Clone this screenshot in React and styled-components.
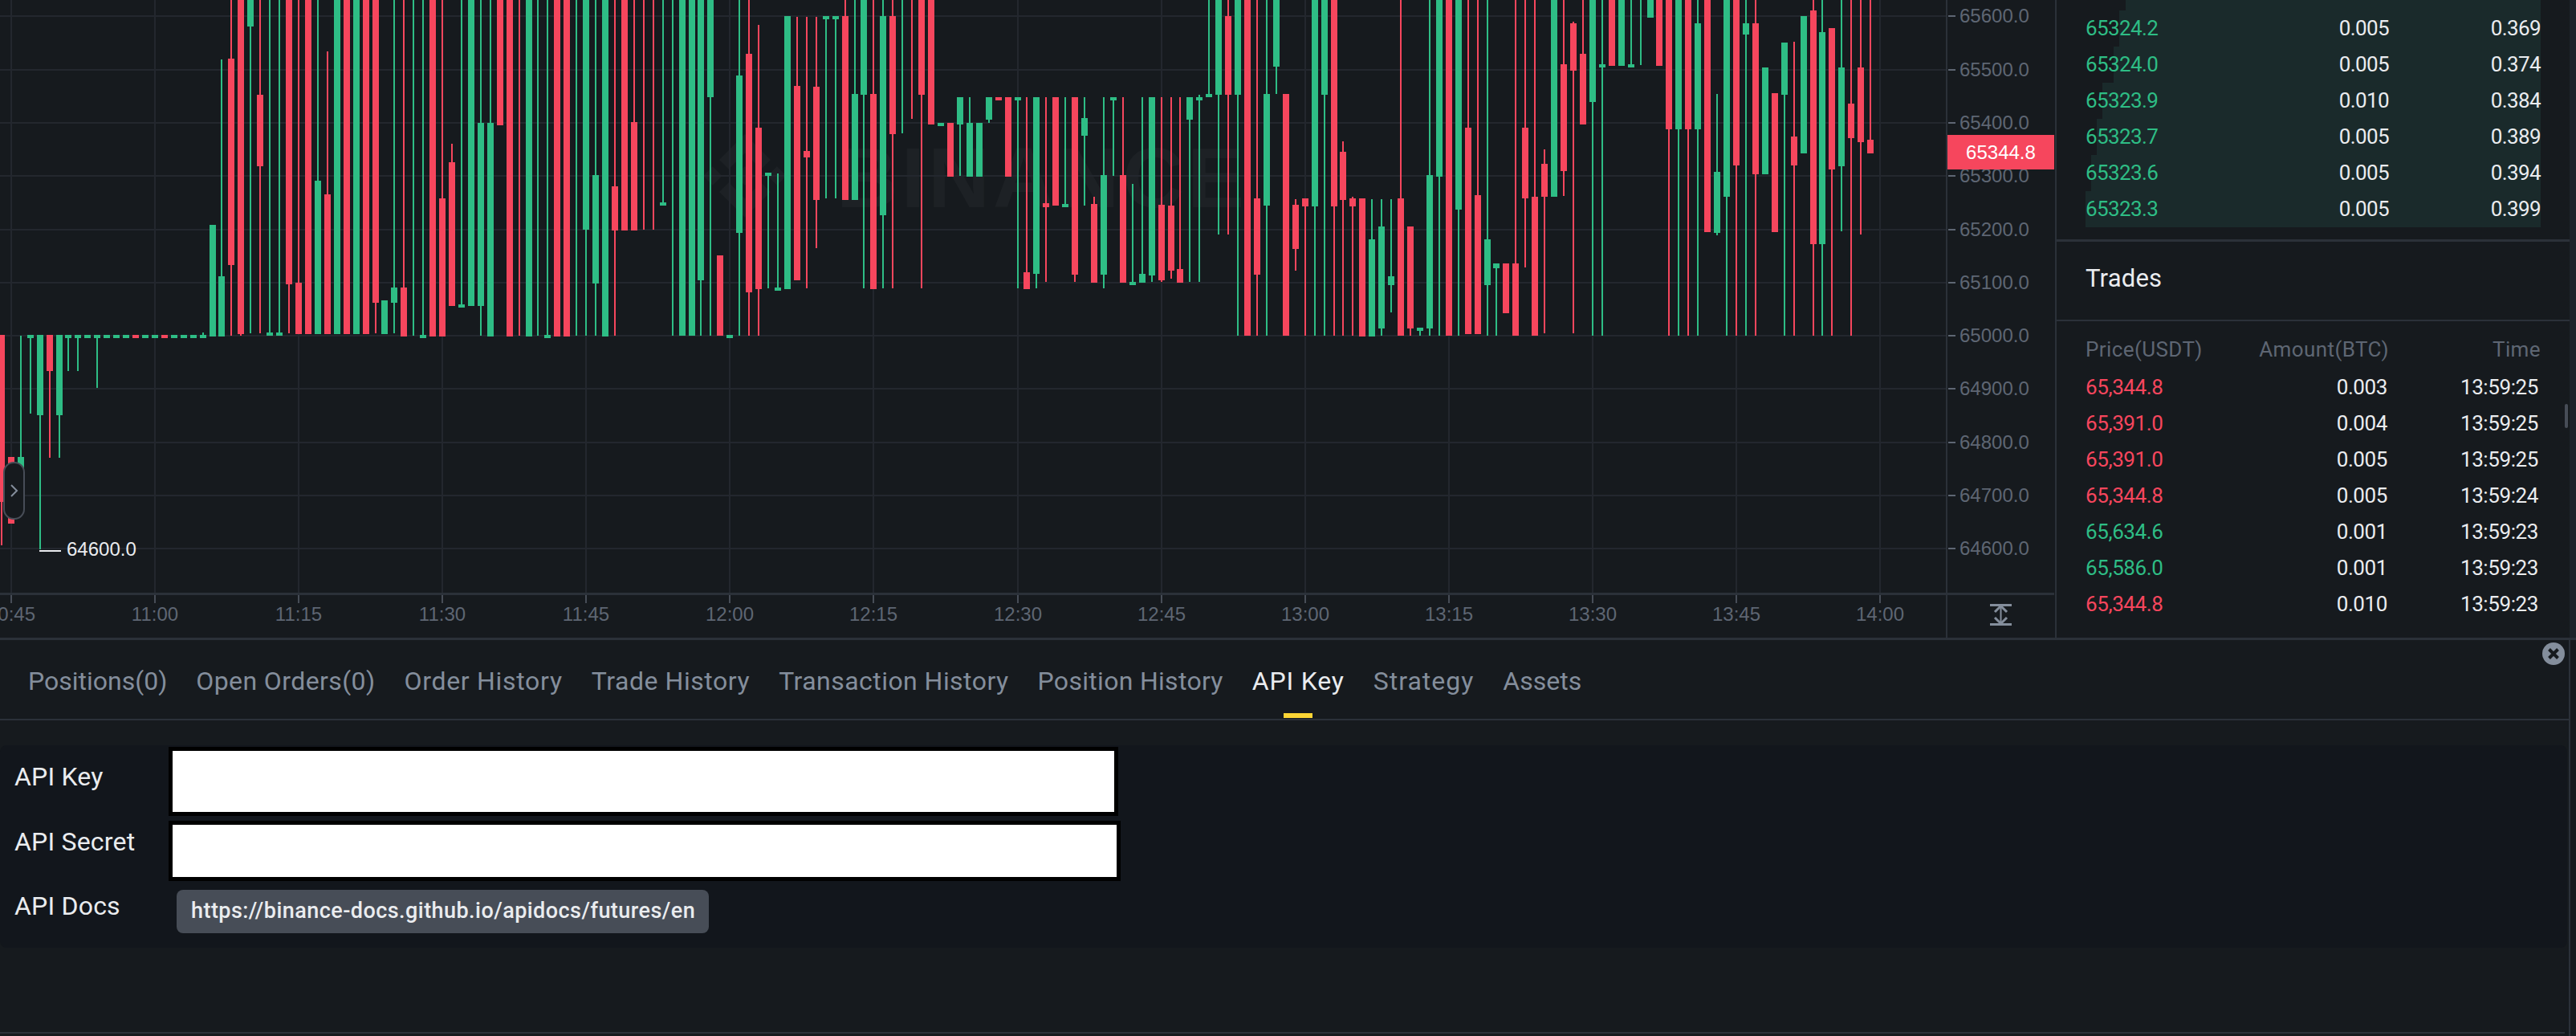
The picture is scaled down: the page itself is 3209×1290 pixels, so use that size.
import React from "react";
import styled, { createGlobalStyle } from "styled-components";

const UI = '"Roboto", "Noto Sans", sans-serif';
const AXIS = '"Liberation Sans", Arial, sans-serif';
const GREEN = "#2ebd85";
const RED = "#f6465d";

const Global = createGlobalStyle`
  html, body { margin: 0; padding: 0; background: #161a1e; }
  #root { width: 3209px; height: 1290px; overflow: hidden; }
`;

const Page = styled.div`
  display: flex;
  flex-direction: column;
  width: 3209px;
  height: 1290px;
  background: #161a1e;
  overflow: hidden;
  position: relative;
`;
const Top = styled.div`
  display: flex;
  height: 797px;
  flex: none;
  box-sizing: border-box;
  border-bottom: 3px solid #2b3139;
`;
const ChartPanel = styled.div`
  position: relative;
  width: 2560px;
  height: 794px;
  flex: none;
  svg { display: block; }
`;
const PriceTag = styled.div`
  position: absolute;
  left: 2426px;
  top: 168px;
  width: 133px;
  height: 43px;
  background: ${RED};
  color: #fff;
  font: 24px/43px ${AXIS};
  text-align: center;
`;
const CollapseHandle = styled.div`
  position: absolute;
  left: 4px;
  top: 575px;
  width: 27px;
  height: 72px;
  box-sizing: border-box;
  border: 2px solid #474d57;
  border-radius: 13px;
  background: #161a1e;
  display: flex;
  align-items: center;
  justify-content: center;
`;
const Sidebar = styled.aside`
  width: 641px;
  flex: none;
  box-sizing: border-box;
  border-left: 2px solid #2b3139;
  display: flex;
  flex-direction: column;
  position: relative;
`;
const RightStrip = styled.div`
  flex: 1;
  background: #1e2329;
`;
const DepthList = styled.div`
  padding: 0 36px;
  height: 301px;
  flex: none;
  box-sizing: border-box;
  border-bottom: 3px solid #2b3139;
  display: flex;
  flex-direction: column;
`;
const DepthStub = styled.div`
  height: 13px;
  flex: none;
  display: flex;
  justify-content: flex-end;
`;
const DepthRow = styled.div`
  position: relative;
  height: 45px;
  flex: none;
  display: grid;
  grid-template-columns: 1fr 1fr 1fr;
  align-items: center;
  font: 400 26px/45px ${UI};
  letter-spacing: -0.6px;
  color: #eaecef;
`;
const DepthBar = styled.div`
  position: absolute;
  right: 0;
  top: 0;
  bottom: 0;
  background: #1a2a2b;
`;
const StubBar = styled.div`
  background: #1a2a2b;
  height: 13px;
`;
const Cell = styled.span`
  position: relative;
  text-align: ${(p) => p.$align || "right"};
  color: ${(p) => p.$color || "#eaecef"};
  padding-right: ${(p) => p.$inset || 0}px;
  white-space: nowrap;
`;
const TradesTitle = styled.div`
  height: 99px;
  flex: none;
  box-sizing: border-box;
  padding-left: 36px;
  border-bottom: 2px solid #2b3139;
  font: 400 31px/92px ${UI};
  letter-spacing: 0.2px;
  color: #eaecef;
`;
const TradesHeader = styled.div`
  display: grid;
  grid-template-columns: 1fr 1fr 1fr;
  padding: 15px 36px 0;
  height: 60px;
  flex: none;
  box-sizing: border-box;
  font: 400 26px/40px ${UI};
  letter-spacing: 0.4px;
`;
const TradeRow = styled.div`
  display: grid;
  grid-template-columns: 1fr 1fr 1fr;
  padding: 0 36px;
  height: 45px;
  flex: none;
  align-items: center;
  font: 400 26px/45px ${UI};
  letter-spacing: -0.4px;
`;
const ScrollThumb = styled.div`
  position: absolute;
  left: 633px;
  top: 503px;
  width: 4px;
  height: 30px;
  background: #474d57;
  border-radius: 2px;
`;
const Bottom = styled.section`
  position: relative;
  flex: 1;
  width: 3202px;
  box-sizing: border-box;
  border-right: 2px solid #2b3139;
  display: flex;
  flex-direction: column;
`;
const Tabs = styled.nav`
  height: 100px;
  flex: none;
  box-sizing: border-box;
  border-bottom: 2px solid #2b3139;
  display: flex;
  gap: 36px;
  padding-left: 35px;
`;
const Tab = styled.div`
  position: relative;
  box-sizing: border-box;
  padding-top: 2px;
  font: 400 32px/98px ${UI};
  letter-spacing: ${(p) => p.$spacing}px;
  color: ${(p) => (p.$active ? "#eaecef" : "#848e9c")};
  white-space: nowrap;
`;
const TabMark = styled.div`
  position: absolute;
  left: 50%;
  bottom: 1px;
  width: 36px;
  height: 6px;
  margin-left: -18px;
  background: #fcd535;
`;
const CloseButton = styled.div`
  position: absolute;
  right: 5px;
  top: 3px;
  width: 28px;
  height: 28px;
  svg { display: block; }
`;
const Form = styled.div`
  margin: 31px 2px 0 0;
  height: 252px;
  flex: none;
  background: #12161c;
  border-radius: 8px;
  padding-top: 2px;
  box-sizing: border-box;
  display: flex;
  flex-direction: column;
`;
const FormRow = styled.div`
  display: flex;
  align-items: flex-start;
  height: ${(p) => p.$h}px;
  flex: none;
`;
const Label = styled.div`
  width: 210px;
  padding-left: 18px;
  box-sizing: border-box;
  flex: none;
  font: 400 32px/40px ${UI};
  letter-spacing: 0.2px;
  color: #eaecef;
  margin-top: ${(p) => p.$top}px;
`;
const KeyInput = styled.input`
  box-sizing: border-box;
  width: ${(p) => p.$w}px;
  height: ${(p) => p.$h}px;
  border: 5px solid #000;
  background: #fff;
  padding: 0;
  outline: none;
`;
const DocsLink = styled.div`
  margin-left: 10px;
  height: 54px;
  width: 663px;
  box-sizing: border-box;
  padding-left: 18px;
  border-radius: 8px;
  background: #474d57;
  color: #eaecef;
  font: 500 27px/52px ${UI};
  letter-spacing: 0.45px;
  white-space: nowrap;
`;
const PageEnd = styled.div`
  margin: auto 5px 3px 0;
  border-top: 2px solid #2b3139;
`;

// [minute index, colour, body top, body bottom, wick top, wick bottom] in measured units
const C = [
  [-1,"r",817,1225,817,1330],[0,"r",1115,1277],[1,"g",1115,1240,820,1240],[2,"g",817,826,817,1010],[3,"g",817,1013,817,1340],
  [4,"r",817,906,817,1117],[5,"g",817,1014,817,1117],[6,"g",817,826,817,905],[7,"g",817,826,817,905],[8,"g",817,826],[9,"g",817,826,817,946],
  [10,"g",817,826],[11,"g",817,826],[12,"g",817,826],[13,"r",817,826],[14,"g",817,826],[15,"g",817,826],[16,"r",817,826],[17,"g",817,826],[18,"g",817,826],[19,"g",817,826],[20,"g",817,826,812,826],
  [21,"g",548,822],[22,"g",674,822,145,822],[23,"r",143,647,-10,820],[24,"r",-10,815,-10,820],[25,"g",-10,65,-10,813],[26,"r",231,405,-10,813],
  [27,"g",812,820,-10,820],[28,"g",812,820,-10,820],[29,"r",-10,693,-10,813],[30,"r",689,815,-10,815],[31,"r",-10,815],[32,"g",441,815,-10,815],[33,"r",475,815,126,815],
  [34,"g",-10,815],[35,"r",-10,815],[36,"g",-10,815],[37,"r",-10,815],[38,"r",-10,738,-10,813],[39,"g",734,815],[40,"g",702,738,-10,813],[41,"r",702,822,-10,822],
  [42,"g",0,0,-10,820],[43,"g",818,826,-10,826],[44,"r",-10,822],[45,"r",485,822,-10,822],[46,"r",396,747,350,747],[47,"g",743,751,-10,751],[48,"g",-10,747],
  [49,"g",300,747,-10,820],[50,"g",300,822,-10,822],[51,"r",-10,305],[52,"r",-10,822],[53,"r",0,0,-10,820],[54,"g",-10,822],[55,"g",0,0,-10,820],[56,"g",818,826,-10,826],
  [57,"r",-10,822],[58,"r",-10,822],[59,"g",0,0,-10,820],[60,"g",-10,560,-10,820],[61,"g",428,692,-10,820],[62,"g",-10,822],[63,"r",455,563,-10,820],[64,"r",-10,563],[65,"r",298,563,-10,563],
  [66,"r",0,0,-10,560],[67,"r",0,0,-10,560],[68,"g",494,502,-10,502],[69,"g",0,0,-10,820],[70,"g",-10,820],[71,"g",-10,820],[72,"g",-10,684,-10,820],[73,"g",-10,238,-10,820],
  [74,"r",623,820],[75,"g",817,825],[76,"g",184,568,-10,820],[77,"r",131,713,-10,820],[78,"r",312,706,61,820],[79,"g",422,430,422,703],[80,"g",702,709,424,709],[81,"g",39,706],
  [82,"r",209,684,41,684],[83,"r",368,384,41,703],[84,"r",211,488,41,606],[85,"g",39,47,39,485],[86,"g",39,47,39,485],[87,"r",39,488,-10,488],[88,"g",229,488,-10,488],
  [89,"g",-10,232,-10,703],[90,"r",229,705,-10,705],[91,"g",39,526,-10,703],[92,"r",39,328,-10,703],[93,"g",0,0,-10,326],[94,"r",0,0,-10,291],[95,"r",-10,232,-10,703],[96,"r",-10,303],
  [97,"g",299,307],[98,"r",299,431],[99,"g",237,303,237,430],[100,"g",299,431,238,431],[101,"g",299,431],[102,"g",237,293,237,300],[103,"r",237,245],[104,"r",237,431],
  [105,"g",237,245,237,703],[106,"r",664,705,238,705],[107,"g",237,669,237,703],[108,"r",496,505,238,688],[109,"r",237,501],[110,"g",497,505,238,505],[111,"r",237,670,237,688],
  [112,"g",289,331,238,501],[113,"r",498,690,480,690],[114,"g",428,670,238,703],[115,"g",237,245,237,430],[116,"r",428,690,238,690],[117,"g",687,695,448,695],[118,"g",668,690,238,690],
  [119,"g",237,672,237,688],[120,"r",500,684,238,688],[121,"r",501,661,238,681],[122,"r",657,690,238,690],[123,"g",237,293,237,688],[124,"g",237,245,232,688],[125,"g",229,237,-10,237],
  [126,"g",-10,232,-10,572],[127,"r",39,232,-10,572],[128,"g",-10,232,-10,820],[129,"r",-10,820],[130,"r",484,670,-10,820],[131,"g",229,502,-10,820],[132,"g",-10,163,-10,230],[133,"r",229,820,229,820],
  [134,"r",500,608,487,660],[135,"r",484,503,484,820],[136,"g",-10,503,-10,820],[137,"g",-10,232,-10,820],[138,"r",-10,503,-10,820],[139,"r",370,488,344,820],[140,"r",484,503,480,820],
  [141,"r",484,822],[142,"g",584,822,487,822],[143,"g",552,802,487,820],[144,"g",674,695,487,763],[145,"r",484,820,-10,820],[146,"r",552,802,552,820],[147,"g",799,807,799,820],
  [148,"g",428,802,-10,820],[149,"g",-10,432,-10,820],[150,"r",-10,820],[151,"g",-10,512,-10,820],[152,"r",311,815,-10,815],[153,"r",477,815,-10,815],[154,"g",584,695,-10,820],
  [155,"g",642,654,642,820],[156,"r",642,765],[157,"r",642,820,-10,820],[158,"r",311,484,-10,652],[159,"r",481,820,-10,820],[160,"r",399,481,365,813],[161,"g",-10,481],
  [162,"r",157,417,-10,478],[163,"r",57,172,52,813],[164,"r",131,303,-10,303],[165,"g",-10,249,-10,820],[166,"g",157,165,-10,820],[167,"r",-10,161],[168,"g",-10,161],[169,"g",157,165,-10,165],
  [170,"g",0,0,-10,158],[171,"g",-10,43],[172,"r",-10,161],[173,"r",-10,315,-10,820],[174,"g",-10,315,-10,820],[175,"r",-10,315,-10,820],[176,"g",57,315,-10,820],[177,"r",-10,566],
  [178,"g",419,568,230,574],[179,"g",-10,481,-10,820],[180,"r",-10,403,-10,820],[181,"g",57,85,-10,820],[182,"r",57,425,-10,820],[183,"g",164,425],[184,"r",227,567],[185,"g",104,231,104,820],
  [186,"r",334,404,101,820],[187,"g",39,374],[188,"r",26,596,-10,820],[189,"g",78,596,-10,820],[190,"r",69,413,69,820],[191,"g",164,405,-10,565],[192,"r",253,338,-10,820],[193,"r",165,346,-10,572],[194,"r",341,374,-10,374],
];

const Y = (v) => v / 1.96;
const X = (i) => Math.round(13.8 + 11.94 * i);
const COL = { g: GREEN, r: RED };

const PRICES = [65600, 65500, 65400, 65300, 65200, 65100, 65000, 64900, 64800, 64700, 64600];
const gridY = (n) => Math.round(20.4 + 66.3 * n);
const TIMES = ["10:45","11:00","11:15","11:30","11:45","12:00","12:15","12:30","12:45","13:00","13:15","13:30","13:45","14:00"];
const timeX = (n) => Math.round(13.8 + 179.1 * n);

function Chart() {
  return (
    <svg width="2560" height="794" viewBox="0 0 2560 794">
      <g fill="#fff" opacity="0.028">
        <g transform="translate(876 167) scale(0.82)">
          <path d="M38.73 53.2l24.59-24.58 24.6 24.6 14.3-14.31L63.32 0 24.42 38.9l14.31 14.3zM0 63.31L14.3 49l14.31 14.31-14.31 14.3L0 63.31zm38.73 10.1L63.32 98l24.6-24.6 14.31 14.29-38.9 38.91-38.91-38.88-.02-.02 14.31-14.29zM97.7 63.31L112 49l14.31 14.3L112 77.61l-14.3-14.3zM77.83 63.3L63.32 48.78 52.59 59.51l-1.24 1.23-2.54 2.54 14.51 14.5 14.51-14.47z" />
        </g>
        <text x="1042" y="258" fontFamily={AXIS} fontWeight="700" fontSize="106" textLength="508" lengthAdjust="spacing">BINANCE</text>
      </g>
      {PRICES.map((p, n) => (
        <rect key={p} x="0" y={gridY(n) - 1} width="2425" height="2" fill="#23272e" />
      ))}
      {TIMES.map((t, n) => (
        <rect key={t} x={timeX(n) - 1} y="0" width="2" height="739" fill="#23272e" />
      ))}
      <g shapeRendering="crispEdges">
        {C.map(([i, c, bt, bb, wt, wb]) => (
          <g key={i} fill={COL[c]}>
            {wt !== undefined && <rect x={X(i) - 1} y={Y(wt)} width="2" height={Y(wb - wt)} />}
            {bb > bt && <rect x={X(i) - 4} y={Y(bt)} width="8" height={Y(bb - bt)} />}
          </g>
        ))}
      </g>
      <rect x="49" y="685" width="27" height="2" fill="#eaecef" />
      <text x="83" y="692" fontFamily={AXIS} fontSize="24" fill="#eaecef">64600.0</text>

      <rect x="0" y="738" width="2559" height="3" fill="#2b3139" />
      <rect x="2424" y="0" width="2" height="794" fill="#2b3139" />
      {TIMES.map((t, n) => (
        <g key={t}>
          <rect x={timeX(n) - 1} y="741" width="2" height="10" fill="#474d57" />
          <text x={timeX(n)} y="773" textAnchor="middle" fontFamily={AXIS} fontSize="24" fill="#5e6673">{t}</text>
        </g>
      ))}
      {PRICES.map((p, n) => (
        <g key={p}>
          <rect x="2427" y={gridY(n) - 1} width="9" height="2" fill="#5e6673" />
          <text x="2441" y={gridY(n) + 8} fontFamily={AXIS} fontSize="24" fill="#5e6673">{p}.0</text>
        </g>
      ))}
      <g stroke="#848e9c" fill="none">
        <path strokeWidth="3" d="M2479 753.5h27M2479 777.5h27" />
        <path strokeWidth="2" d="M2492.5 755v21" />
        <path strokeWidth="3" d="M2485 762l7.5-7.5 7.5 7.5M2485 769l7.5 7.5 7.5-7.5" />
      </g>
    </svg>
  );
}

const ASKS = [
  ["65324.2", "0.005", "0.369", 525],
  ["65324.0", "0.005", "0.374", 532],
  ["65323.9", "0.010", "0.384", 546],
  ["65323.7", "0.005", "0.389", 553],
  ["65323.6", "0.005", "0.394", 560],
  ["65323.3", "0.005", "0.399", 567],
];
const TRADES = [
  ["65,344.8", "0.003", "13:59:25", RED],
  ["65,391.0", "0.004", "13:59:25", RED],
  ["65,391.0", "0.005", "13:59:25", RED],
  ["65,344.8", "0.005", "13:59:24", RED],
  ["65,634.6", "0.001", "13:59:23", GREEN],
  ["65,586.0", "0.001", "13:59:23", GREEN],
  ["65,344.8", "0.010", "13:59:23", RED],
];
const TABS = [
  ["Positions(0)", 0],
  ["Open Orders(0)", 0.4],
  ["Order History", 0.7],
  ["Trade History", 0.55],
  ["Transaction History", 0.45],
  ["Position History", 0.3],
  ["API Key", 0.8],
  ["Strategy", 1],
  ["Assets", 0],
];

export default function App() {
  return (
    <Page>
      <Global />
      <Top>
        <ChartPanel>
          <Chart />
          <PriceTag>65344.8</PriceTag>
          <CollapseHandle>
            <svg width="14" height="20" viewBox="0 0 14 20" fill="none" stroke="#848e9c" strokeWidth="2">
              <path d="M3 3l7 7-7 7" />
            </svg>
          </CollapseHandle>
        </ChartPanel>
        <Sidebar>
          <DepthList>
            <DepthStub><StubBar style={{ width: 517 }} /></DepthStub>
            {ASKS.map(([p, a, s, w]) => (
              <DepthRow key={p}>
                <DepthBar style={{ width: w }} />
                <Cell $align="left" $color={GREEN}>{p}</Cell>
                <Cell>{a}</Cell>
                <Cell>{s}</Cell>
              </DepthRow>
            ))}
          </DepthList>
          <TradesTitle>Trades</TradesTitle>
          <TradesHeader>
            <Cell $align="left" $color="#5e6673">Price(USDT)</Cell>
            <Cell $color="#5e6673">Amount(BTC)</Cell>
            <Cell $color="#5e6673">Time</Cell>
          </TradesHeader>
          {TRADES.map(([p, a, t, c], n) => (
            <TradeRow key={n}>
              <Cell $align="left" $color={c}>{p}</Cell>
              <Cell $inset={2}>{a}</Cell>
              <Cell $inset={3}>{t}</Cell>
            </TradeRow>
          ))}
          <ScrollThumb />
        </Sidebar>
        <RightStrip />
      </Top>
      <Bottom>
        <Tabs>
          {TABS.map(([t, s]) => (
            <Tab key={t} $active={t === "API Key"} $spacing={s}>
              {t}
              {t === "API Key" && <TabMark />}
            </Tab>
          ))}
        </Tabs>
        <CloseButton>
          <svg width="28" height="28" viewBox="0 0 28 28">
            <circle cx="14" cy="14" r="14" fill="#848e9c" />
            <path d="M8.5 8.5l11 11M19.5 8.5l-11 11" stroke="#161a1e" strokeWidth="4" />
          </svg>
        </CloseButton>
        <Form>
          <FormRow $h={92}>
            <Label $top={17}>API Key</Label>
            <KeyInput $w={1183} $h={86} />
          </FormRow>
          <FormRow $h={86}>
            <Label $top={6}>API Secret</Label>
            <KeyInput $w={1186} $h={75} />
          </FormRow>
          <FormRow $h={54}>
            <Label $top={0}>API Docs</Label>
            <DocsLink>https://binance-docs.github.io/apidocs/futures/en</DocsLink>
          </FormRow>
        </Form>
        <PageEnd />
      </Bottom>
    </Page>
  );
}
